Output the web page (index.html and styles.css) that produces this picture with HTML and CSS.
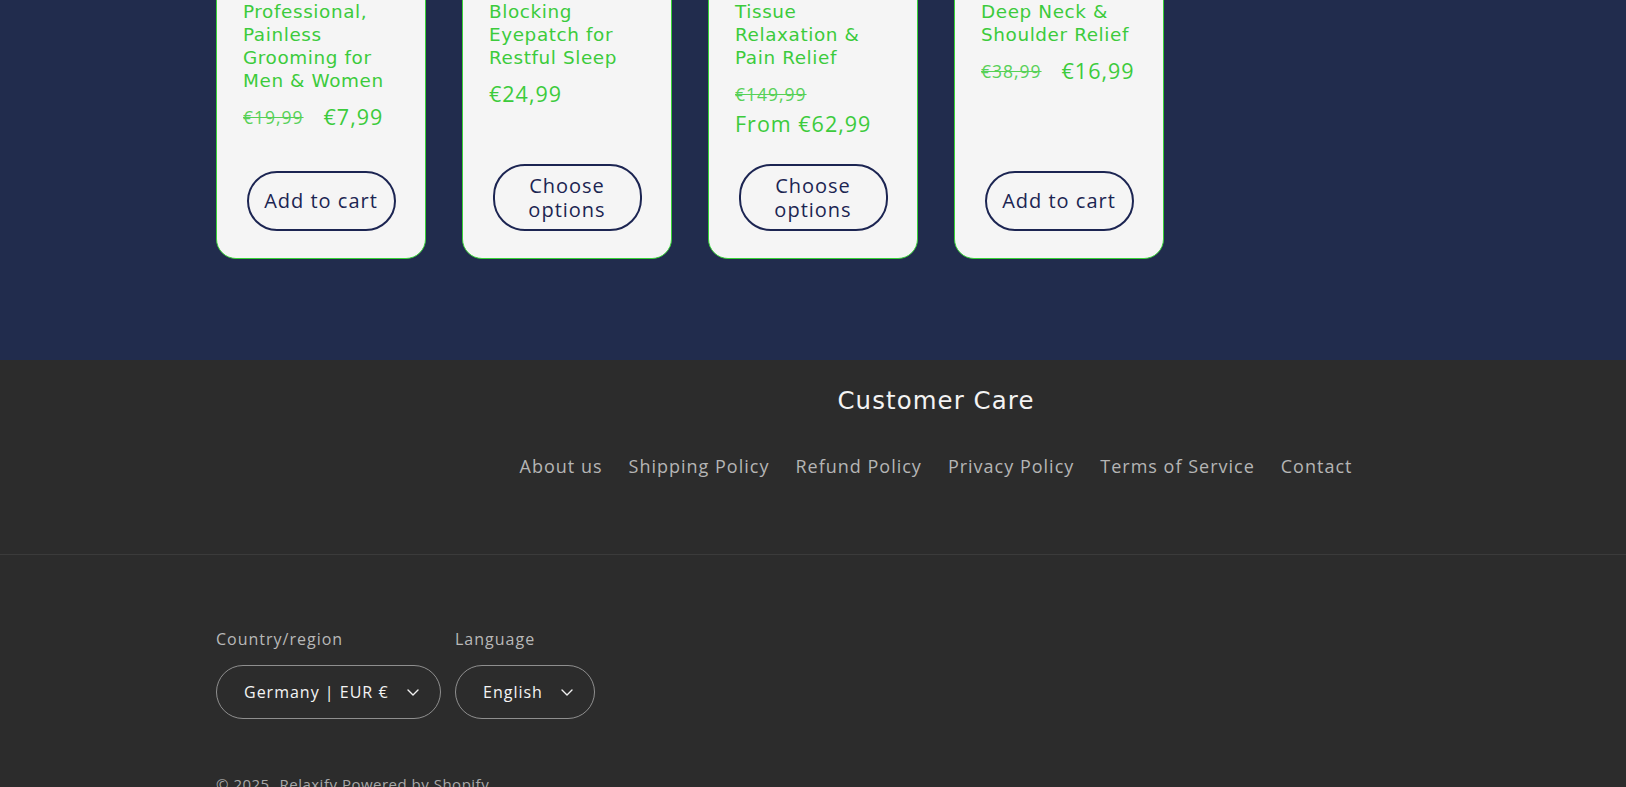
FILE: index.html
```html
<!DOCTYPE html>
<html lang="en">
<head>
<meta charset="utf-8">
<title>Relaxify</title>
<link rel="stylesheet" href="styles.css">
</head>
<body>
<section class="products">
  <div class="page-width">
    <ul class="product-grid">
      <li class="card">
        <h3 class="card__title">Professional, Painless Grooming for Men &amp; Women</h3>
        <div class="price">
          <s class="price__old">€19,99</s>
          <span class="price__sale">€7,99</span>
        </div>
        <button class="card__btn" type="button">Add to cart</button>
      </li>
      <li class="card">
        <h3 class="card__title">Blocking Eyepatch for Restful Sleep</h3>
        <div class="price">
          <span class="price__sale">€24,99</span>
        </div>
        <button class="card__btn" type="button">Choose options</button>
      </li>
      <li class="card">
        <h3 class="card__title">Tissue Relaxation &amp; Pain Relief</h3>
        <div class="price">
          <s class="price__old">€149,99</s>
          <span class="price__sale">From €62,99</span>
        </div>
        <button class="card__btn" type="button">Choose options</button>
      </li>
      <li class="card">
        <h3 class="card__title">Deep Neck &amp; Shoulder Relief</h3>
        <div class="price">
          <s class="price__old">€38,99</s>
          <span class="price__sale">€16,99</span>
        </div>
        <button class="card__btn" type="button">Add to cart</button>
      </li>
    </ul>
  </div>
</section>

<footer class="footer">
  <div class="page-width footer__top">
    <div class="footer__spacer"></div>
    <div class="footer__block">
      <h2 class="footer__heading">Customer Care</h2>
      <ul class="footer__links">
        <li><a href="#">About us</a></li>
        <li><a href="#">Shipping Policy</a></li>
        <li><a href="#">Refund Policy</a></li>
        <li><a href="#">Privacy Policy</a></li>
        <li><a href="#">Terms of Service</a></li>
        <li><a href="#">Contact</a></li>
      </ul>
    </div>
  </div>
  <div class="footer__bottom">
    <div class="page-width">
      <div class="localization">
        <div class="localization__field">
          <span class="localization__label">Country/region</span>
          <button class="select select--country" type="button">
            <span>Germany | EUR €</span>
            <svg class="chevron" viewBox="0 0 12 7" width="12" height="7" aria-hidden="true"><path d="M1 1l5 5 5-5" fill="none" stroke="currentColor" stroke-width="1.4" stroke-linecap="round" stroke-linejoin="round"/></svg>
          </button>
        </div>
        <div class="localization__field">
          <span class="localization__label">Language</span>
          <button class="select select--lang" type="button">
            <span>English</span>
            <svg class="chevron" viewBox="0 0 12 7" width="12" height="7" aria-hidden="true"><path d="M1 1l5 5 5-5" fill="none" stroke="currentColor" stroke-width="1.4" stroke-linecap="round" stroke-linejoin="round"/></svg>
          </button>
        </div>
      </div>
      <p class="copyright">© 2025, <a href="#">Relaxify</a> <a href="#">Powered by Shopify</a></p>
    </div>
  </div>
</footer>
</body>
</html>
```

FILE: styles.css
```css
* { box-sizing: border-box; }

html, body {
  margin: 0;
  padding: 0;
}

body {
  font-family: "Open Sans", "Noto Sans", sans-serif;
  background: #2c2c2c;
  overflow: hidden;
}

.page-width {
  max-width: 1294px;
  margin: 0 auto;
  padding: 0 50px;
}

/* ---------- products (page is scrolled: card tops lie above the viewport) ---------- */
.products {
  background: #212c4d;
  padding-bottom: 101px;
}

.product-grid {
  list-style: none;
  margin: -40px 0 0;
  padding: 0;
  display: grid;
  grid-template-columns: repeat(5, 1fr);
  column-gap: 36px;
}

.card {
  display: flex;
  flex-direction: column;
  background: #f5f5f5;
  border: 1px solid #37d137;
  border-radius: 0 0 20px 20px;
  padding: 39px 26px 27px;
  height: 299px;
}

.card__title {
  margin: 0;
  font-family: "DejaVu Sans", sans-serif;
  font-weight: normal;
  font-size: 18.4px;
  line-height: 23px;
  letter-spacing: 0.6px;
  color: #3ccb3c;
}

.price {
  display: flex;
  flex-wrap: wrap;
  align-items: center;
  column-gap: 20px;
  row-gap: 4px;
  margin-top: 12px;
  color: #3ccb3c;
  letter-spacing: 1px;
}

.price__old {
  font-size: 17.5px;
  line-height: 26px;
  opacity: 0.85;
}

.price__sale {
  font-size: 21.5px;
  line-height: 26px;
}

.card__btn {
  margin-top: auto;
  align-self: center;
  width: 149px;
  min-height: 60px;
  padding: 7.5px 12px;
  display: flex;
  align-items: center;
  justify-content: center;
  background: transparent;
  border: 2px solid #1c2552;
  border-radius: 32px;
  color: #1c2552;
  font-family: "Open Sans", sans-serif;
  font-size: 20px;
  line-height: 24px;
  letter-spacing: 1px;
  text-align: center;
}

/* ---------- footer ---------- */
.footer {
  background: #2c2c2c;
  color: #b5b5b5;
}

.footer__top {
  display: grid;
  grid-template-columns: 210px 1fr;
  column-gap: 36px;
  padding-top: 25px;
  padding-bottom: 74px;
}

.footer__block {
  display: flex;
  flex-direction: column;
  align-items: center;
}

.footer__heading {
  margin: 0;
  font-family: "DejaVu Sans", sans-serif;
  font-weight: normal;
  font-size: 24.4px;
  line-height: 31px;
  letter-spacing: 1.1px;
  color: #f3f3f3;
}

.footer__links {
  list-style: none;
  margin: 37px 0 0;
  padding: 0;
  display: flex;
  gap: 26px;
}

.footer__links a {
  color: #b5b5b5;
  text-decoration: none;
  font-size: 18px;
  line-height: 27px;
  letter-spacing: 1px;
}

.footer__bottom {
  border-top: 1px solid #3b3b3b;
  padding-top: 72px;
}

.localization {
  display: flex;
  gap: 14px;
}

.localization__field {
  display: flex;
  flex-direction: column;
  gap: 14px;
}

.localization__label {
  font-size: 16px;
  line-height: 24px;
  letter-spacing: 1px;
  font-weight: 500;
  color: #b8b8b8;
}

.select {
  display: flex;
  align-items: center;
  justify-content: space-between;
  height: 54px;
  padding: 0 21px 0 27px;
  background: transparent;
  border: 1px solid #8f8f8f;
  border-radius: 27px;
  color: #f4f4f4;
  font-family: "Open Sans", sans-serif;
  font-size: 16px;
  font-weight: 500;
  letter-spacing: 1px;
}

.select--country { width: 225px; }
.select--lang { width: 140px; }

.chevron {
  flex: none;
  color: #f0f0f0;
}

.copyright {
  margin: 55px 0 0;
  font-size: 15px;
  line-height: 20px;
  letter-spacing: 0.5px;
  color: #a8a8a8;
}

.copyright a {
  color: inherit;
  text-decoration: none;
  margin-left: 1px;
}
.copyright a + a { margin-left: 0; }
```
